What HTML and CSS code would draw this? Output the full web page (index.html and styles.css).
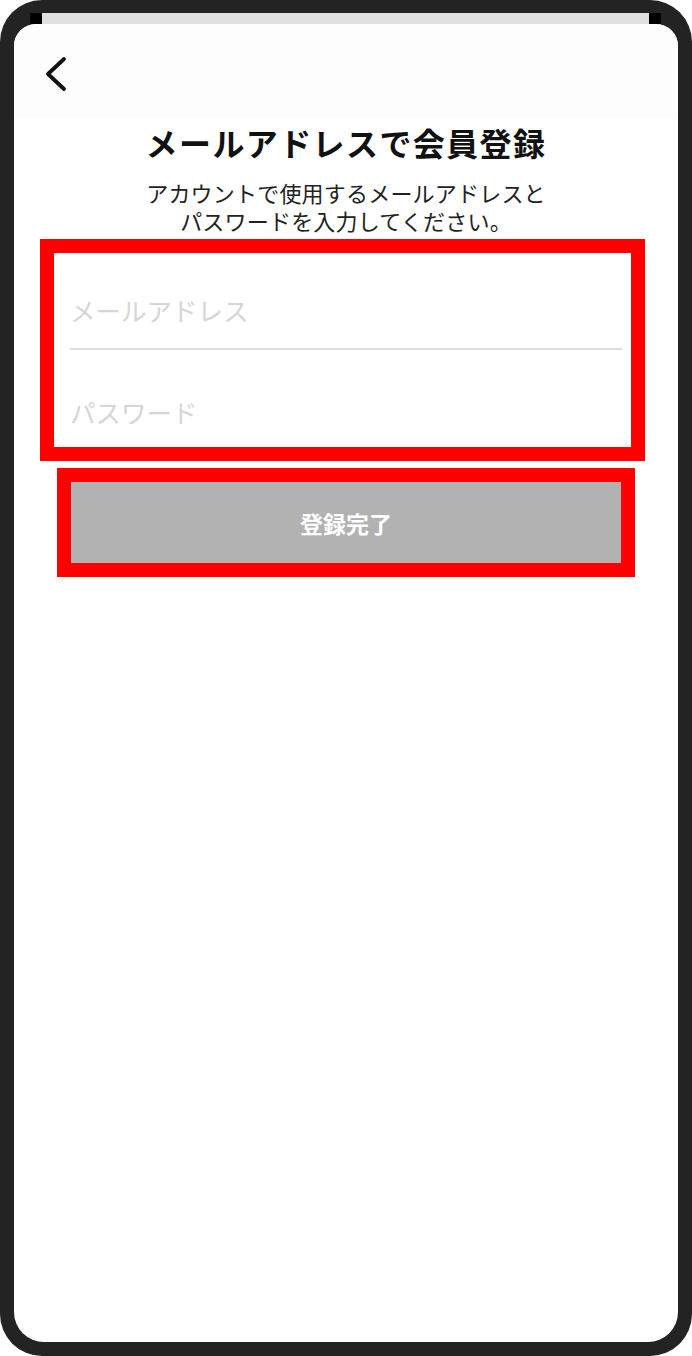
FILE: index.html
```html
<!DOCTYPE html>
<html lang="ja">
<head>
<meta charset="utf-8">
<title>メールアドレスで会員登録</title>
<link rel="stylesheet" href="styles.css">
</head>
<body>
<div class="device">
  <div class="strip"></div>
  <div class="screen">
    <header class="topbar">
      <svg class="back" width="26" height="36" viewBox="0 0 26 36" aria-label="戻る">
        <path d="M21 3 L5 18 L21 33" fill="none" stroke="#111" stroke-width="3.8" stroke-linecap="round" stroke-linejoin="round"/>
      </svg>
    </header>
    <h1 class="title">メールアドレスで会員登録</h1>
    <div class="lead">
      <p class="lead-line">アカウントで使用するメールアドレスと</p>
      <p class="lead-line">パスワードを入力してください。</p>
    </div>
    <div class="hl form-box">
      <div class="field field-email"><span class="ph">メールアドレス</span></div>
      <div class="field field-pass"><span class="ph">パスワード</span></div>
    </div>
    <div class="hl btn-box">
      <div class="submit">登録完了</div>
    </div>
  </div>
</div>
</body>
</html>
```
FILE: styles.css
```css
html, body {
  margin: 0;
  padding: 0;
  background: #ffffff;
}
body {
  font-family: "Noto Sans CJK JP", "Noto Sans", sans-serif;
}
.device {
  width: 692px;
  height: 1356px;
  box-sizing: border-box;
  background: #232323;
  border-radius: 42px;
  padding: 13px 14px 14px;
  display: flex;
  flex-direction: column;
}
.strip {
  height: 11px;
  margin: 0 17px 0 16px;
  background: #e0e0e0;
  border-left: 12px solid #000;
  border-right: 12px solid #000;
  flex: none;
}
.screen {
  flex: 1;
  background: #ffffff;
  border-radius: 22px 22px 30px 30px;
  overflow: hidden;
  display: flex;
  flex-direction: column;
}
.topbar {
  height: 94px;
  flex: none;
  background: #fdfdfd;
  box-sizing: border-box;
  padding: 32px 0 0 29px;
}
.back {
  display: block;
}
.title {
  margin: 4px 0 0;
  text-align: center;
  font-size: 32px;
  line-height: 40px;
  font-weight: 700;
  letter-spacing: 1.4px;
  color: #111;
}
.lead {
  margin: 19px 0 0;
  text-align: center;
  font-family: "Liberation Sans", "Noto Sans CJK JP", sans-serif;
  font-size: 22px;
  line-height: 28px;
  letter-spacing: 0.2px;
  color: #222;
}
.lead-line {
  margin: 0;
  height: 28px;
}
.hl {
  border: 14px solid #ff0000;
}
.form-box {
  margin: 2px 0 0 26px;
  width: 577px;
  background: #fff;
}
.field {
  margin: 0 9px 0 16px;
  font-size: 25.5px;
  line-height: 30px;
  color: #d6d6d6;
}
.field-email {
  padding: 42px 0 23px;
  border-bottom: 2px solid #dcdcdc;
}
.field-pass {
  padding: 47px 0 20px;
}
.btn-box {
  margin: 7px 0 0 43px;
  width: 550px;
}
.submit {
  height: 81px;
  background: #b2b2b2;
  color: #ffffff;
  font-size: 23px;
  font-weight: 700;
  display: flex;
  align-items: center;
  justify-content: center;
}
```
